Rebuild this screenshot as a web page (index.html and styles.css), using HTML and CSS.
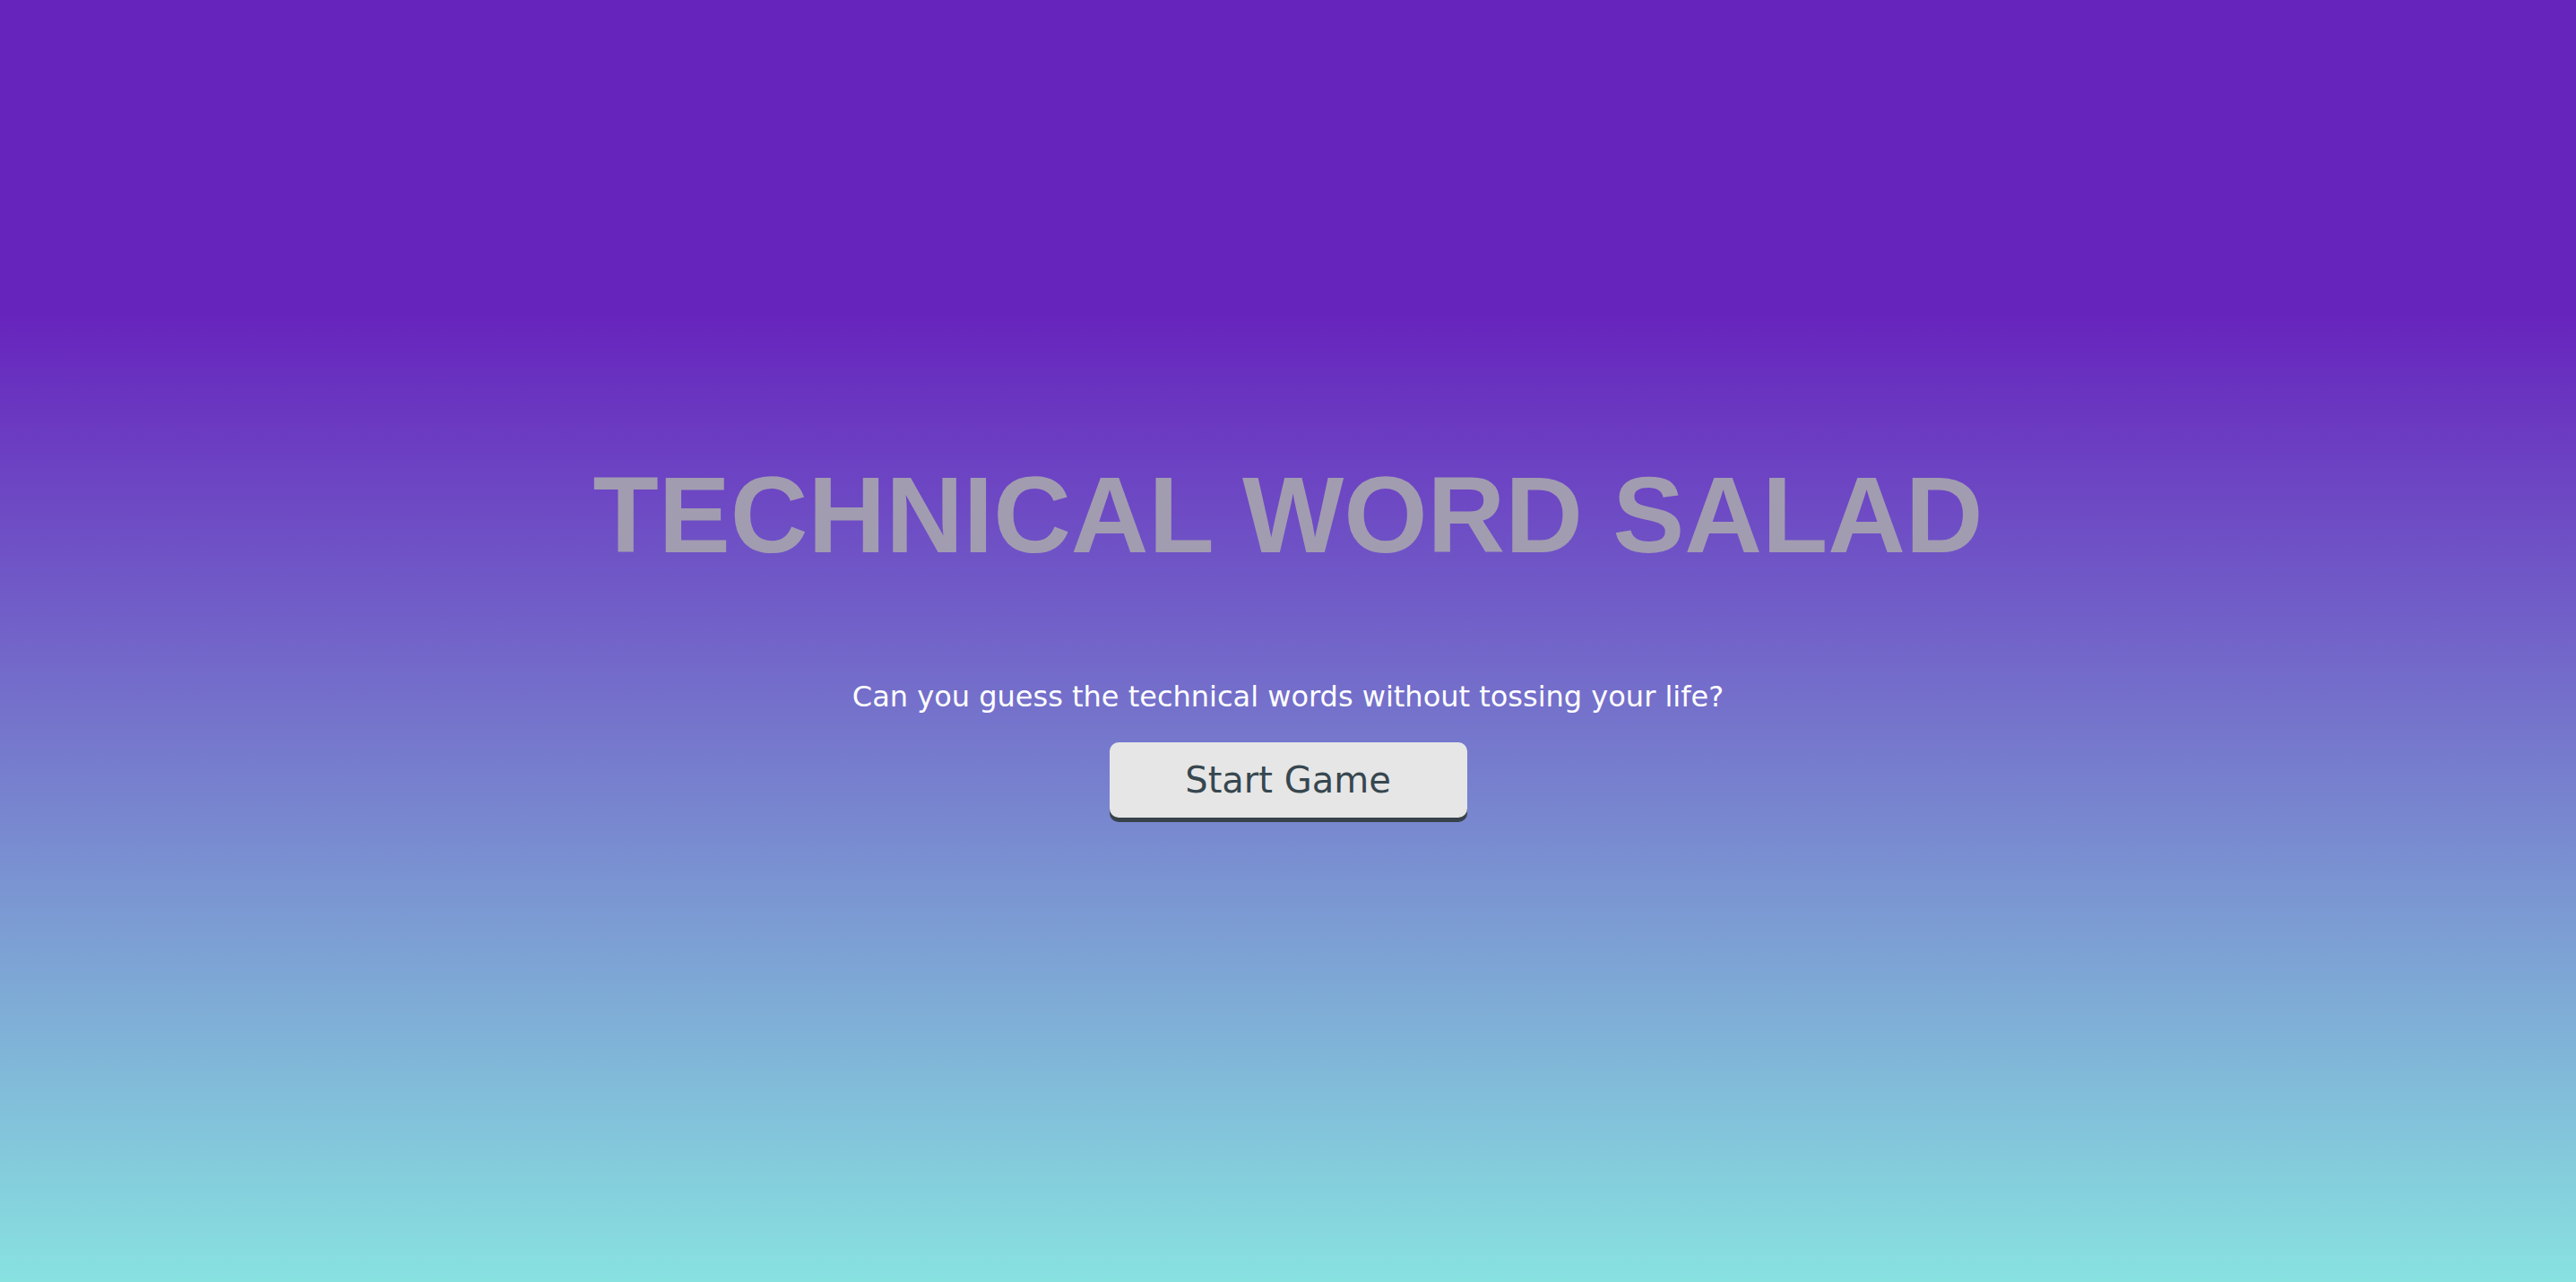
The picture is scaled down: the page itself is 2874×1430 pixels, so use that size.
FILE: index.html
```html
<!DOCTYPE html>
<html lang="en">
<head>
<meta charset="utf-8">
<title>Technical Word Salad</title>
<link rel="stylesheet" href="styles.css">
</head>
<body>
<main class="screen">
  <h1 class="title">TECHNICAL WORD SALAD</h1>
  <p class="tagline">Can you guess the technical words without tossing your life?</p>
  <button class="start-btn" type="button">Start Game</button>
</main>
</body>
</html>
```

FILE: styles.css
```css
html, body {
  margin: 0;
  padding: 0;
  height: 100%;
}

body {
  background: linear-gradient(to bottom, #6724bd 0%, #6724bd 24.5%, #88e2e0 100%);
  font-family: "DejaVu Sans", "Open Sans", sans-serif;
  overflow: hidden;
}

.screen {
  height: 100vh;
  display: flex;
  flex-direction: column;
  align-items: center;
  padding-top: 514px;
  box-sizing: border-box;
}

.title {
  margin: 0;
  font-family: "Liberation Sans", Arial, sans-serif;
  font-weight: 700;
  font-size: 120px;
  line-height: 120px;
  color: #a29cb1;
  white-space: nowrap;
}

.tagline {
  margin: 124px 0 0;
  font-size: 32px;
  line-height: 38px;
  color: #ffffff;
  white-space: nowrap;
}

.start-btn {
  margin-top: 32px;
  width: 399px;
  padding: 18px 0;
  border: none;
  border-radius: 10px;
  background: #e6e6e6;
  color: #37474f;
  font-family: "DejaVu Sans", "Open Sans", sans-serif;
  font-size: 40px;
  line-height: 48px;
  box-shadow: 0 5px 0 #37424a;
  cursor: pointer;
}
```
